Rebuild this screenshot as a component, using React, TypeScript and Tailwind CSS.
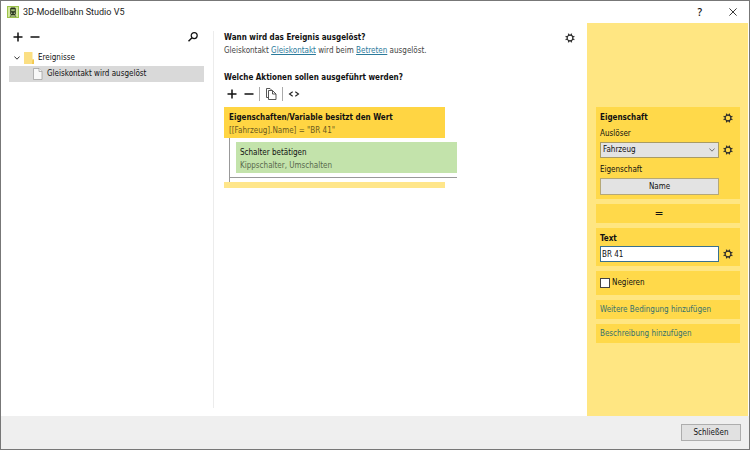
import type { ReactNode } from "react";

const GearIcon = () => (
  <svg viewBox="0 0 20 20" className="h-[10px] w-[10px]" fill="none" stroke="#2b2b2b">
    <circle cx="10" cy="10" r="5.700" strokeWidth="2.200" />
    <g strokeWidth="2.600">
      <path d="M8 4.500L6.800 1.200M12 4.500l1.200-3.300M8 15.500l-1.200 3.300M12 15.500l1.200 3.300" />
      <path d="M4.500 8L1.200 6.800M4.500 12l-3.300 1.200M15.500 8l3.300-1.200M15.500 12l3.300 1.200" />
    </g>
  </svg>
);

const PlusIcon = () => (
  <svg viewBox="0 0 10 10" className="h-[10px] w-[10px]" stroke="#111" strokeWidth="1.5">
    <path d="M5 .5v9M.5 5h9" />
  </svg>
);

const MinusIcon = () => (
  <svg viewBox="0 0 10 10" className="h-[10px] w-[10px]" stroke="#111" strokeWidth="1.5">
    <path d="M.5 5h9" />
  </svg>
);

const SearchIcon = () => (
  <svg viewBox="0 0 10 10" className="h-[10px] w-[10px]" fill="none" stroke="#111" strokeWidth="1.2">
    <circle cx="6.200" cy="3.600" r="3" />
    <path d="M4 5.800L.5 9.300" strokeWidth="1.5" />
  </svg>
);

const CopyIcon = () => (
  <svg viewBox="0 0 12 12" className="h-3 w-3" fill="none" stroke="#444" strokeWidth=".9">
    <path d="M3.500 9.500h-2v-9h3.500l2 2" />
    <path d="M3.500 2.500H7.500l3.500 3.500v5.500H3.500z" fill="#fff" />
    <path d="M7.500 2.500V6H11" />
  </svg>
);

const CodeIcon = () => (
  <svg viewBox="0 0 12 8" className="h-2 w-3" fill="none" stroke="#222" strokeWidth="1.1">
    <path d="M4.700 1.800L1.500 4l3.200 2.200M7.300 1.800L10.500 4 7.300 6.200" />
  </svg>
);

const FolderIcon = () => (
  <svg viewBox="0 0 10 12" className="h-3 w-[10px]">
    <path d="M0 0h8.500v7.500H10V12H0z" fill="#fbdf83" />
    <path d="M8.500 7.500H10V12H8z" fill="#f3c94f" />
  </svg>
);

const PageIcon = () => (
  <svg viewBox="0 0 10 12" className="h-3 w-[10px]" fill="#f8f8f8" stroke="#999" strokeWidth=".7">
    <path d="M.5.5H6l3 3v8H.5z" />
    <path d="M6 .5v3h3" />
  </svg>
);

const TrainIcon = () => (
  <svg viewBox="0 0 12 12" className="h-3 w-3">
    <rect width="12" height="12" fill="#9cc24a" />
    <rect x="1" y="1" width="10" height="10" fill="#d3e89c" />
    <path d="M4 1.500h4l.8 1V8L8 9H4l-.8-1V2.500z" fill="#26331b" />
    <path d="M4.200 3.200h3.600v2H4.200z" fill="#9fb779" />
    <circle cx="4.700" cy="7.200" r=".6" fill="#e8f3cd" />
    <circle cx="7.300" cy="7.200" r=".6" fill="#e8f3cd" />
    <path d="M4 9.200L3 11M8 9.200L9 11M3.800 10h4.400" stroke="#26331b" strokeWidth=".7" />
  </svg>
);

const IconButton = ({ label, children }: { label: string; children: ReactNode }) => (
  <button type="button" aria-label={label} className="flex shrink-0 items-center justify-center">
    {children}
  </button>
);

const Card = ({ className = "", children }: { className?: string; children: ReactNode }) => (
  <section className={`bg-[#ffd94a] px-1 ${className}`}>{children}</section>
);

function TitleBar() {
  return (
    <header className="flex h-[22px] shrink-0 items-center bg-white pr-3 pl-[6px]">
      <TrainIcon />
      <h1 className="ml-1 grow font-[Roboto,sans-serif] text-[9px] text-[#222]">3D-Modellbahn Studio V5</h1>
      <button type="button" aria-label="Hilfe" className="mr-[27px] font-['Open_Sans',sans-serif] text-[10px] font-semibold">
        ?
      </button>
      <IconButton label="Fenster schließen">
        <svg viewBox="0 0 8 8" className="h-2 w-2" stroke="#222" strokeWidth=".9">
          <path d="M.4.4l7.200 7.200M7.600.4L.4 7.600" />
        </svg>
      </IconButton>
    </header>
  );
}

function EventTree() {
  return (
    <nav className="my-2 w-[213px] shrink-0 border-r border-[#ececec] pr-[9px] pl-2">
      <div className="flex h-3 items-center gap-[7px] pr-[6px] pl-1">
        <IconButton label="Ereignis hinzufügen"><PlusIcon /></IconButton>
        <IconButton label="Ereignis entfernen"><MinusIcon /></IconButton>
        <div className="grow" />
        <IconButton label="Suchen"><SearchIcon /></IconButton>
      </div>
      <ul className="mt-[7px]">
        <li>
          <div className="flex h-4 items-center pl-[5px]">
            <svg viewBox="0 0 6 4" className="h-1 w-[6px]" fill="none" stroke="#333">
              <path d="M.4.5L3 3.200 5.600.5" />
            </svg>
            <span className="mr-1 ml-1"><FolderIcon /></span>
            <span className="leading-[14px]">Ereignisse</span>
          </div>
          <ul>
            <li className="flex h-4 items-center gap-1 bg-[#d9d9d9] pl-6">
              <PageIcon />
              <span className="leading-[14px]">Gleiskontakt wird ausgelöst</span>
            </li>
          </ul>
        </li>
      </ul>
    </nav>
  );
}

function EventEditor() {
  return (
    <main className="min-w-0 grow pt-2 pr-3 pl-[10px] leading-[13px]">
      <div className="flex items-center justify-between">
        <h2 className="font-bold">Wann wird das Ereignis ausgelöst?</h2>
        <IconButton label="Einstellungen"><GearIcon /></IconButton>
      </div>
      <p className="text-[#444]">
        Gleiskontakt <a href="#kontakt" className="text-[#2b7a9b] underline">Gleiskontakt</a> wird beim{" "}
        <a href="#betreten" className="text-[#2b7a9b] underline">Betreten</a> ausgelöst.
      </p>
      <h2 className="mt-[14px] font-bold">Welche Aktionen sollen ausgeführt werden?</h2>
      <div className="mt-[2px] flex h-4 items-center pl-[3px]">
        <IconButton label="Aktion hinzufügen"><PlusIcon /></IconButton>
        <span className="w-[7px]" />
        <IconButton label="Aktion entfernen"><MinusIcon /></IconButton>
        <span className="mr-[5px] ml-[5px] h-[14px] w-px bg-[#aaa]" />
        <IconButton label="Kopieren"><CopyIcon /></IconButton>
        <span className="mr-[5px] ml-[5px] h-[14px] w-px bg-[#aaa]" />
        <IconButton label="Skript"><CodeIcon /></IconButton>
      </div>
      <div className="mt-[5px] w-2/3 max-w-[233px]">
        <div className="mr-3 h-[31px] bg-[#ffd543] px-[5px] pt-1">
          <h3 className="font-bold">Eigenschaften/Variable besitzt den Wert</h3>
          <p className="text-[#6b5a20]">[[Fahrzeug].Name] = "BR 41"</p>
        </div>
        <div className="ml-[5px] border-l border-[#999] pt-1 pb-1">
          <div className="ml-[6px] h-[31px] bg-[#c3e3ab] px-1 pt-1">
            <p>Schalter betätigen</p>
            <p className="text-[#58694c]">Kippschalter, Umschalten</p>
          </div>
          <div className="mt-1 h-px bg-[#999]" />
        </div>
        <div className="mr-3 h-[6px] bg-[#ffe68a]" />
      </div>
    </main>
  );
}

function PropertyPanel() {
  return (
    <aside className="flex w-[161px] shrink-0 flex-col gap-[5px] bg-[#ffe682] pt-[84px] pr-2 pl-[9px]">
      <Card className="h-[92px] pt-1">
        <div className="flex items-center justify-between pr-[3px]">
          <h2 className="leading-[13px] font-bold">Eigenschaft</h2>
          <IconButton label="Eigenschaft konfigurieren"><GearIcon /></IconButton>
        </div>
        <label htmlFor="trigger" className="mt-1 block">Auslöser</label>
        <div className="mt-[2px] flex items-center gap-1 pr-[3px]">
          <div className="relative grow">
            <select id="trigger" className="block h-4 w-full appearance-none border border-[#a99b63] bg-[#e3e3e3] px-[2px] leading-3">
              <option>Fahrzeug</option>
            </select>
            <svg viewBox="0 0 6 4" className="pointer-events-none absolute top-[6px] right-1 h-1 w-[6px]" fill="none" stroke="#555" strokeWidth=".8">
              <path d="M.4.5L3 3.200 5.600.5" />
            </svg>
          </div>
          <IconButton label="Auslöser konfigurieren"><GearIcon /></IconButton>
        </div>
        <p className="mt-[6px]">Eigenschaft</p>
        <div className="mt-[2px] pr-[17px]">
          <button type="button" className="block h-[17px] w-full border border-[#b5a878] bg-[#e3e3e3]">Name</button>
        </div>
      </Card>
      <Card className="flex h-[19px] items-center justify-center">
        <button type="button" className="mr-[18px] text-[12px] leading-[15px]">=</button>
      </Card>
      <Card className="h-[38px] pt-1">
        <label htmlFor="text" className="block leading-[13px] font-bold">Text</label>
        <div className="mt-px flex items-center gap-1 pr-[3px]">
          <input id="text" defaultValue="BR 41" className="h-4 min-w-0 grow border border-[#39718f] bg-white px-px" />
          <IconButton label="Text konfigurieren"><GearIcon /></IconButton>
        </div>
      </Card>
      <Card className="flex h-6 items-center">
        <label className="flex items-center gap-[2px] leading-[14px]">
          <input type="checkbox" className="h-[10px] w-[10px] appearance-none border border-[#444] bg-white checked:bg-[#39718f]" />
          Negieren
        </label>
      </Card>
      <Card className="flex h-[19px] items-center">
        <a href="#bedingung" className="leading-[14px] text-[#35706e]">Weitere Bedingung hinzufügen</a>
      </Card>
      <Card className="flex h-[19px] items-center">
        <a href="#beschreibung" className="leading-[14px] text-[#35706e]">Beschreibung hinzufügen</a>
      </Card>
    </aside>
  );
}

export default function App() {
  return (
    <div className="flex min-h-screen flex-col border border-[#777] bg-white font-['DejaVu_Sans_Condensed','DejaVu_Sans',sans-serif] text-[8px] leading-3 text-[#111]">
      <TitleBar />
      <div className="flex grow pr-px">
        <EventTree />
        <EventEditor />
        <PropertyPanel />
      </div>
      <footer className="flex h-[33px] shrink-0 items-center justify-end bg-[#efefef] pr-2">
        <button type="button" className="h-[17px] w-[60px] border border-[#adadad] bg-[#e1e1e1]">Schließen</button>
      </footer>
    </div>
  );
}
